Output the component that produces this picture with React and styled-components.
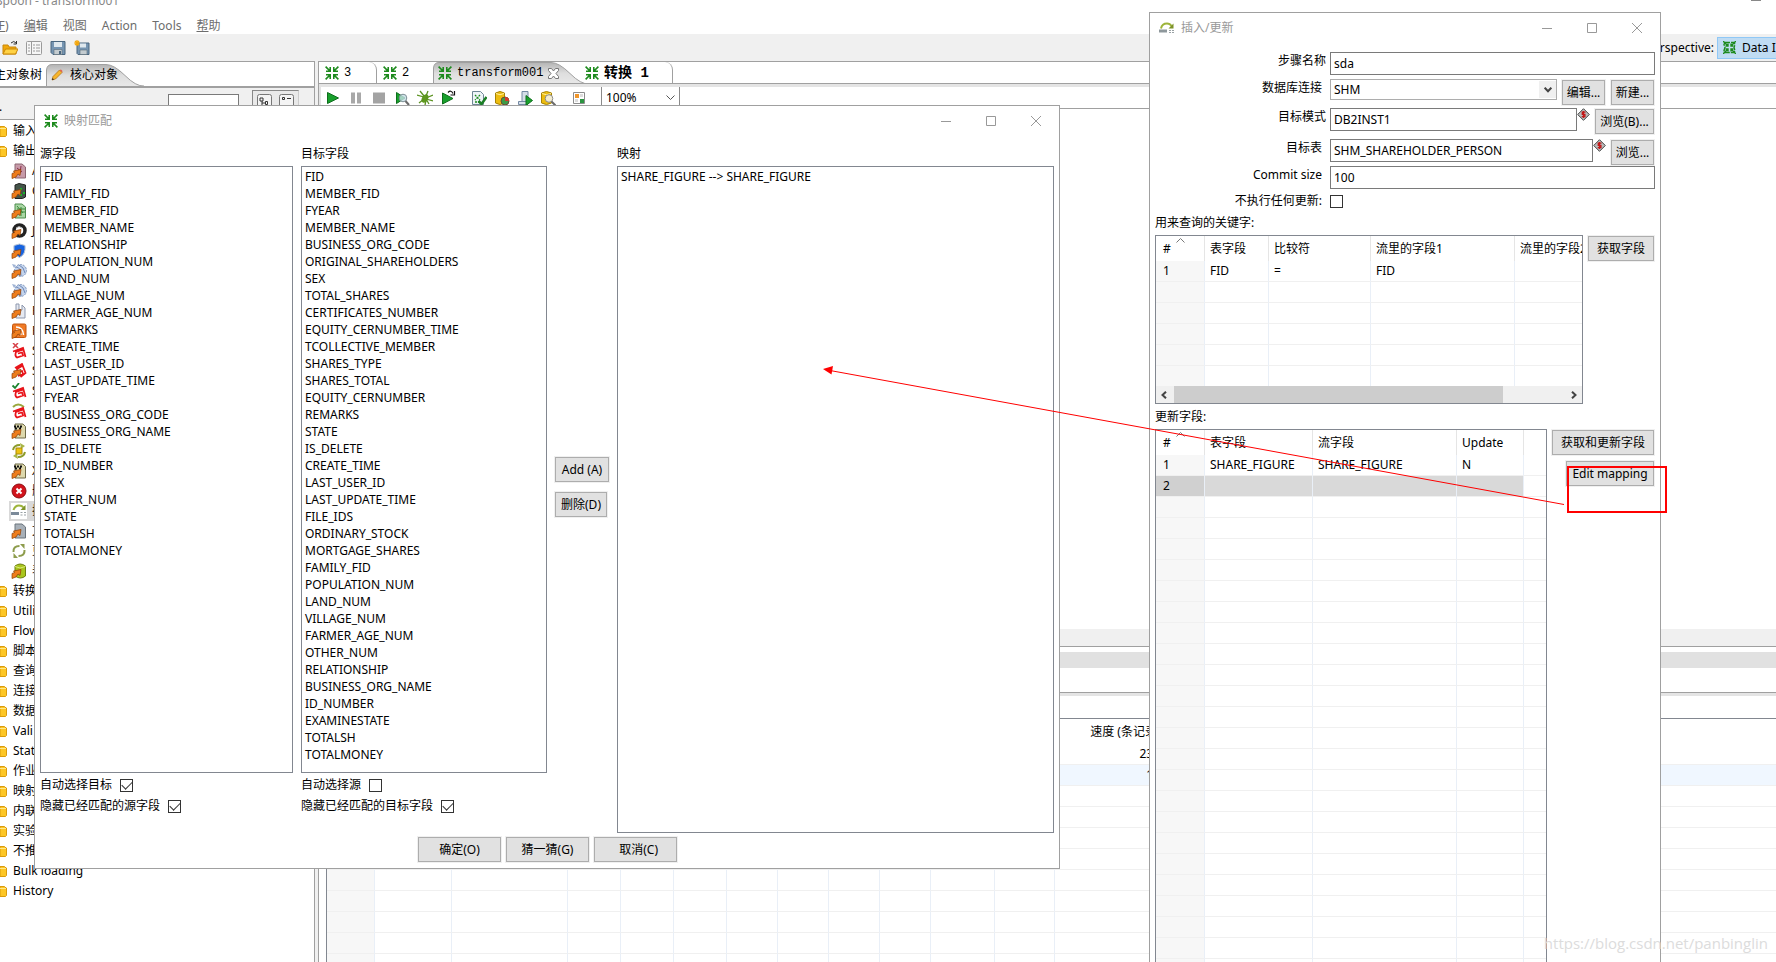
import React from 'react';
import styled, { createGlobalStyle } from 'styled-components';

const GlobalStyle = createGlobalStyle`
  * {
    box-sizing: border-box;
  }

  body {
    margin: 0;
    overflow: hidden;
    background: #fff;
  }

  body, button, input, select {
    font-family: "Noto Sans", "Noto Sans CJK SC", sans-serif;
    font-size: 12px;
    line-height: 18px;
    color: #000;
  }
`;

/* ---------- data ---------- */

const SOURCE_FIELDS = [
  'FID', 'FAMILY_FID', 'MEMBER_FID', 'MEMBER_NAME', 'RELATIONSHIP', 'POPULATION_NUM',
  'LAND_NUM', 'VILLAGE_NUM', 'FARMER_AGE_NUM', 'REMARKS', 'CREATE_TIME', 'LAST_USER_ID',
  'LAST_UPDATE_TIME', 'FYEAR', 'BUSINESS_ORG_CODE', 'BUSINESS_ORG_NAME', 'IS_DELETE',
  'ID_NUMBER', 'SEX', 'OTHER_NUM', 'STATE', 'TOTALSH', 'TOTALMONEY',
];

const TARGET_FIELDS = [
  'FID', 'MEMBER_FID', 'FYEAR', 'MEMBER_NAME', 'BUSINESS_ORG_CODE', 'ORIGINAL_SHAREHOLDERS',
  'SEX', 'TOTAL_SHARES', 'CERTIFICATES_NUMBER', 'EQUITY_CERNUMBER_TIME', 'TCOLLECTIVE_MEMBER',
  'SHARES_TYPE', 'SHARES_TOTAL', 'EQUITY_CERNUMBER', 'REMARKS', 'STATE', 'IS_DELETE',
  'CREATE_TIME', 'LAST_USER_ID', 'LAST_UPDATE_TIME', 'FILE_IDS', 'ORDINARY_STOCK',
  'MORTGAGE_SHARES', 'FAMILY_FID', 'POPULATION_NUM', 'LAND_NUM', 'VILLAGE_NUM',
  'FARMER_AGE_NUM', 'OTHER_NUM', 'RELATIONSHIP', 'BUSINESS_ORG_NAME', 'ID_NUMBER',
  'EXAMINESTATE', 'TOTALSH', 'TOTALMONEY',
];

const OUTPUT_STEPS = [
  { name: 'A', icon: 'access' },
  { name: 'C', icon: 'cube' },
  { name: 'E', icon: 'excel' },
  { name: 'J', icon: 'json' },
  { name: 'L', icon: 'ldap' },
  { name: 'P', icon: 'palo' },
  { name: 'P', icon: 'palo' },
  { name: 'P', icon: 'props' },
  { name: 'R', icon: 'rss' },
  { name: 'S', icon: 'sfDelete' },
  { name: 'S', icon: 'sfInsert' },
  { name: 'S', icon: 'sfUpdate' },
  { name: 'S', icon: 'sfUpsert' },
  { name: 'S', icon: 'sql' },
  { name: 'S', icon: 'sync' },
  { name: 'X', icon: 'sql' },
  { name: '删', icon: 'remove' },
  { name: '插', icon: 'upsert', selected: true },
  { name: '文', icon: 'text' },
  { name: '更', icon: 'update' },
  { name: '表', icon: 'table' },
];

const FOLDERS = [
  '转换', 'Utili', 'Flow', '脚本', '查询', '连接', '数据', 'Vali', 'Stat', '作业',
  '映射', '内联', '实验', '不推', 'Bulk loading', 'History',
];

/* ---------- icons ---------- */

const Svg = styled.svg`
  display: block;
  flex: none;
`;

const MappingIcon = () => (
  <Svg width="14" height="14" viewBox="0 0 14 14" fill="none" stroke="#1d8a1d" strokeWidth="1.6">
    <path d="M.6.6 5 5M5.2 1v4.3H1M13.4.6 9 5M8.8 1v4.3H13M.6 13.4 5 9M5.2 13V8.7H1M13.4 13.4 9 9M8.8 13V8.7H13" />
  </Svg>
);

const PerspectiveIcon = () => (
  <Svg width="13" height="13" viewBox="0 0 13 13" fill="none" stroke="#1d8a1d" strokeWidth="1.4">
    <path d="M2 1.5h9l1 2-1 3 1 3-1 2H2l-1-2 1-3-1-3z" strokeDasharray="5 1" />
    <path d="M0 0l5 5M13 0L8 5M0 13l5-5M13 13L8 8M5 2.500v2.500H2.500M8 2.500v2.500h2.500M5 10.500V8H2.500M8 10.500V8h2.500" />
  </Svg>
);

const UpsertIcon = () => (
  <Svg width="16" height="12" viewBox="0 0 16 12">
    <path d="M2 6.500Q3 1.500 8 1.500q3 0 4.500 2.500" fill="none" stroke="#9db43a" strokeWidth="2" />
    <path d="M14.500 1.500v5h-5z" fill="#7d9228" />
    <path d="M0 7.500h8v3H0z" fill="#8e989c" />
    <path d="M10 8h2v1h-2zM13 8h2v1h-2zM10 10h2v1h-2zM13 10h2v1h-2z" fill="#9aa2a5" />
  </Svg>
);

const FolderIcon = () => (
  <Svg width="7" height="11" viewBox="0 0 7 11">
    <path d="M0 .5h4.500l1.500 1.500h.5v7.500l-1 1H0z" fill="#fdc625" stroke="#d99a0c" />
    <path d="M0 2.500h6" stroke="#ffe88a" />
  </Svg>
);

const OrangeArrow = () => (
  <path d="M1 15.500v-5l2.500-1L2.500 8 10 6.500l-1 6-2-1.500-2 3z" fill="#ee7d1c" stroke="#8a3f08" strokeWidth=".7" />
);

const Salesforce = () => (
  <path d="M2 8.500 12 5l2.500 9M12.500 6.500 5 9q-1.500 4 1 5.500l6-2-1-3-4 1" fill="none" stroke="#e8141a" strokeWidth="1.8" />
);

const STEP_SHAPES = {
  access: (
    <>
      <path d="M4 1h7l3.500 3v11H4z" fill="#c79aa8" stroke="#8d6672" />
      <path d="M6 5l5 4M10 3l-1 7" stroke="#8a2b4c" />
      <OrangeArrow />
    </>
  ),
  cube: (
    <>
      <path d="M4 2l4-1.500 6.500 1.500v12l-3 1.500H4z" fill="#44544a" stroke="#222" />
      <path d="M9 5h2v2H9zM12 9h2v2h-2zM9 11h2v2H9z" fill="#19b529" />
      <OrangeArrow />
    </>
  ),
  excel: (
    <>
      <path d="M4 1h7l3.500 3v11H4z" fill="#a9d6a4" stroke="#4f8d4e" />
      <path d="M6 6h8M6 9h8M10 4v9M6 3l6 7" stroke="#3a8a3b" />
      <OrangeArrow />
    </>
  ),
  json: (
    <>
      <circle cx="8.500" cy="7.500" r="5.500" fill="none" stroke="#222" strokeWidth="3.500" />
      <path d="M5 5q3-3 6 0" fill="none" stroke="#aaa" />
      <OrangeArrow />
    </>
  ),
  ldap: (
    <>
      <path d="M8.500 1 14 2.500q1 9-5.500 12Q2 11.500 3 2.500z" fill="#1763df" stroke="#b8c4d4" />
      <OrangeArrow />
    </>
  ),
  palo: (
    <>
      <circle cx="9.500" cy="7.500" r="6" fill="#c4d4ec" stroke="#7f96bf" strokeDasharray="2 1" />
      <path d="M5 4q5 0 5 9M8 2q5 2 6 8" fill="none" stroke="#6f88b8" />
      <path d="M1 1l4 1-2 3z" fill="#9fb3d4" />
      <OrangeArrow />
    </>
  ),
  props: (
    <>
      <path d="M5 1h3v6h3V2l3 3v10H5z" fill="#e6eaf2" stroke="#8d97ad" />
      <OrangeArrow />
    </>
  ),
  rss: (
    <>
      <rect x="1.500" y="1" width="13.500" height="13.500" rx="1.500" fill="#f07a25" stroke="#c2540c" />
      <path d="M5 4q7 0 7.500 8M5 7q4 0 5 5" fill="none" stroke="#fff" strokeWidth="1.500" />
      <OrangeArrow />
    </>
  ),
  sfDelete: (
    <>
      <Salesforce />
      <path d="M2 0l5 5M7 0L2 5" stroke="#d6434a" strokeWidth="1.500" />
    </>
  ),
  sfInsert: (
    <>
      <path d="M4 5l7-4 3.500 9-5 4M11 3L6 6l1 3 4-1 1 3-5 2" fill="none" stroke="#e8141a" strokeWidth="1.800" />
      <OrangeArrow />
    </>
  ),
  sfUpdate: (
    <>
      <Salesforce />
      <path d="M1.500 2.500L4 5l4-5" fill="none" stroke="#1c8430" strokeWidth="1.800" />
    </>
  ),
  sfUpsert: (
    <>
      <path d="M2 4q5-5 11 0" fill="none" stroke="#9aa83e" strokeWidth="2" />
      <Salesforce />
    </>
  ),
  sql: (
    <>
      <path d="M4 1h8l2.500 2.500V15H4z" fill="#ddd8ac" stroke="#6e6a48" />
      <path d="M3 3.500h2M6 3.500h2M9 3.500h2M4 5.500h2M8 5.500h2" stroke="#111" strokeWidth="2" />
      <OrangeArrow />
    </>
  ),
  sync: (
    <>
      <path d="M2 7q1-5 7-5M14 9q-1 5-7 5" fill="none" stroke="#8d9c2c" strokeWidth="2" />
      <path d="M9 0l5 3-4 3zM7 16l-5-3 4-3z" fill="#a8b648" />
      <path d="M5 5h6v6H5z" fill="#eec310" stroke="#a98a06" />
    </>
  ),
  remove: (
    <>
      <circle cx="8" cy="8" r="7" fill="#d2141c" stroke="#8e0b10" />
      <path d="M5.500 5.500l5 5M10.500 5.500l-5 5" stroke="#fff" strokeWidth="2" />
    </>
  ),
  upsert: (
    <>
      <path d="M2.500 7Q4 2.500 8 2.500q3 0 4.500 2" fill="none" stroke="#9db43a" strokeWidth="2" />
      <path d="M14.500 2v5h-5z" fill="#7d9228" />
      <path d="M0 9h8v3H0z" fill="#7b8a99" />
      <path d="M9.500 9h2v1h-2zM13 9h2v1h-2zM9.500 11.500h2v1h-2zM13 11.500h2v1h-2z" fill="#9aa2a5" />
    </>
  ),
  text: (
    <>
      <path d="M4 1h7l3.500 3v11H4z" fill="#a8b0b8" stroke="#6b747d" />
      <OrangeArrow />
    </>
  ),
  update: (
    <>
      <path d="M2.500 9q-.5-6 6-6M13.500 7q.5 6-6 6" fill="none" stroke="#8d9c4c" strokeWidth="2" />
      <path d="M9 1h4.500v5zM7 15H2.500v-5z" fill="#8d9c4c" />
    </>
  ),
  table: (
    <>
      <path d="M4 3q5-4 10.500 0v10q-5 4-10.500 0z" fill="#a9c51c" stroke="#6d8110" />
      <path d="M4 3.500q5 3 10.500 0" fill="none" stroke="#dcea7c" />
      <OrangeArrow />
    </>
  ),
};

const StepIcon = ({ name }) => (
  <Svg width="16" height="16" viewBox="0 0 16 16">
    {STEP_SHAPES[name]}
  </Svg>
);

const TOOL_SHAPES = {
  open: (
    <>
      <path d="M1 14V5h5l1 2h7v7z" fill="#f0a80c" stroke="#c98708" />
      <path d="M1 14l2.500-5H16l-2.500 5z" fill="#ffd244" stroke="#c98708" />
      <path d="M9 3q3-3 5 0M14.500 1v3h-3" fill="none" stroke="#333" />
    </>
  ),
  explore: (
    <>
      <rect x=".5" y="1.500" width="15" height="13" rx="1" fill="#f6f6f6" stroke="#9a9a9a" />
      <path d="M5.500 2v12" stroke="#9a9a9a" />
      <path d="M2 5h2M2 8h2M2 11h2M7 5h2M7 8h2M7 11h2M10 5h4M10 8h4M10 11h4" stroke="#9a9a9a" />
    </>
  ),
  save: (
    <>
      <path d="M1 1.500h14v13H3l-2-2z" fill="#7695b2" stroke="#4b677f" />
      <path d="M4 2h8v5H4z" fill="#dfe8ee" />
      <path d="M4 9.500h8v5H4z" fill="#c4ccd0" stroke="#5d6c77" strokeWidth=".6" />
      <path d="M9 11h2v3H9z" fill="#4b677f" />
    </>
  ),
  saveAs: (
    <>
      <path d="M3 3h12v11.500H4l-1-1z" fill="#7695b2" stroke="#4b677f" />
      <path d="M6 3.500h6v4H6z" fill="#dfe8ee" />
      <path d="M6 10h7v4.500H6z" fill="#c4ccd0" stroke="#5d6c77" strokeWidth=".6" />
      <path d="M3 0v6M0 3h6M1 1l4 4M5 1L1 5" stroke="#f5a70c" strokeWidth="1.200" />
    </>
  ),
  play: <path d="M2.500 2.500v11l11-5.500z" fill="#18a02c" stroke="#0e6e1c" />,
  pause: <path d="M3 2.500h4v11H3zM9 2.500h4v11H9z" fill="#a8a8a8" />,
  stop: <path d="M2 2.500h12v11H2z" fill="#a3a3a3" />,
  preview: (
    <>
      <path d="M2.500 2.500v11L11 8z" fill="#18a02c" stroke="#0e6e1c" />
      <circle cx="9" cy="8" r="3.800" fill="#c5dfe6" fillOpacity=".8" stroke="#7c8d94" />
      <path d="M11.500 11l3.500 4" stroke="#6b6b6b" strokeWidth="2" />
    </>
  ),
  debug: (
    <>
      <ellipse cx="8" cy="8.500" rx="3" ry="4.500" fill="#5f9a1e" transform="rotate(30 8 8.500)" />
      <path d="M0 5l7 2M3 1l4 5M11 1L9 6M16 5L9 8M16 11L9 9M2 13l5-4M8 15l1-5M12 14l-3-5" stroke="#5b9220" strokeWidth="1.300" />
    </>
  ),
  replay: (
    <>
      <path d="M2.500 3v11L13 8.500z" fill="#18a02c" stroke="#0e6e1c" />
      <path d="M8 2.500q3-3 5 1M14.500 1v4h-4" fill="none" stroke="#111" strokeWidth="1.200" />
    </>
  ),
  verify: (
    <>
      <path d="M1.500 1.500h8l3 3v10h-11z" fill="#eef4f8" stroke="#6f8796" />
      <path d="M4 5l5 5M9 5l-5 5M4 12h4" stroke="#1d8a1d" strokeWidth="1.300" strokeDasharray="2 1" />
      <path d="M7.500 11l3 3L15.500 7" fill="none" stroke="#1b7f25" strokeWidth="2.500" />
    </>
  ),
  impact: (
    <>
      <path d="M1.500 3q4.500-3 9 0v10q-4.500 3-9 0z" fill="#edbd10" stroke="#a88405" />
      <path d="M2 3.500q4 2.500 8 0" fill="none" stroke="#fff0a0" />
      <circle cx="11" cy="11" r="4" fill="#3d9c48" stroke="#6c4a33" />
      <path d="M11 11V7a4 4 0 0 1 4 4z" fill="#d63a2b" />
    </>
  ),
  script: (
    <>
      <path d="M5 1.500h6v10H5zM1.500 11.500h9v3h-9z" fill="#d5dee8" stroke="#7389a3" />
      <path d="M9 5.500v10l6.500-5z" fill="#18a02c" stroke="#0e6e1c" />
    </>
  ),
  database: (
    <>
      <path d="M1.500 3q5-3 10 0v10q-5 3-10 0z" fill="#edbd10" stroke="#a88405" />
      <path d="M2 3.500q4.500 2.500 9 0" fill="none" stroke="#fff0a0" />
      <circle cx="9" cy="8.500" r="3.800" fill="#f3ecd0" stroke="#8b8b8b" />
      <path d="M11.500 11.500L15.500 15.500" stroke="#6b6b6b" strokeWidth="2" />
    </>
  ),
  grid: (
    <>
      <path d="M2.500 2.500h11v11h-11z" fill="#fff" stroke="#8c8c8c" />
      <path d="M4 4h4v4H4z" fill="#f0952a" />
      <path d="M9 9h4v4H9z" fill="#2b9440" />
      <path d="M9 4h3v3H9zM4 9h3v3H4z" fill="#dcdcdc" />
    </>
  ),
};

const ToolIcon = ({ name }) => (
  <Svg width="16" height="16" viewBox="0 0 16 16">
    {TOOL_SHAPES[name]}
  </Svg>
);

const PencilIcon = () => (
  <Svg width="12" height="12" viewBox="0 0 12 12">
    <path d="M1 11l1-3.500L8.500 1 11 3.500 4.500 10z" fill="#f7b52b" stroke="#b3741a" strokeWidth=".8" />
    <path d="M8.500 1L11 3.500l.5-1.500L10 .5z" fill="#e0604c" />
    <path d="M1 11l.6-2L3 10.400z" fill="#222" />
  </Svg>
);

const VariableIcon = () => (
  <Svg width="13" height="13" viewBox="0 0 13 13">
    <path d="M6.500.7 12.300 6.500 6.500 12.300.7 6.500z" fill="#b9bcbc" stroke="#444" />
    <path d="M8.500 4.200H5.300v2.200h2.600v2.300H4.700M6.500 3v7" fill="none" stroke="#c01818" strokeWidth="1.300" />
  </Svg>
);

const MinimizeGlyph = () => (
  <Svg width="10" height="10" viewBox="0 0 10 10"><path d="M0 5.500h10" stroke="#999" /></Svg>
);
const MaximizeGlyph = () => (
  <Svg width="10" height="10" viewBox="0 0 10 10"><path d="M.5.5h9v9h-9z" fill="none" stroke="#999" /></Svg>
);
const CloseGlyph = () => (
  <Svg width="10" height="10" viewBox="0 0 10 10"><path d="M0 0l10 10M10 0L0 10" stroke="#999" /></Svg>
);

/* ---------- shared controls ---------- */

const IconButton = styled.button`
  display: flex;
  padding: 0;
  border: 0;
  background: none;
`;

const Button = styled.button`
  flex: none;
  height: 25px;
  width: ${props => props.$width}px;
  padding: 0;
  border: 1px solid #adadad;
  background: #e1e1e1;
  box-shadow: 0 0 0 1px #f0f0f0;
  text-align: center;
  white-space: pre;
`;

const Check = styled.input`
  appearance: none;
  flex: none;
  width: 13px;
  height: 13px;
  margin: 0;
  border: 1px solid #333;
  background: #fff;

  &:checked::after {
    content: '';
    display: block;
    width: 9px;
    height: 5px;
    margin: 1px;
    border: solid #333;
    border-width: 0 0 1px 1px;
    transform: rotate(-45deg);
  }
`;

const TitleBar = styled.header`
  display: flex;
  align-items: center;
  flex: none;
  height: 29px;
  padding: 0 18px 0 9px;
  gap: 6px;
  color: #999;

  h2 {
    flex: 1;
    margin: 0;
    font-size: 12px;
    font-weight: 400;
  }
`;

const WindowButtons = styled.div`
  display: flex;
  gap: 35px;
`;

const DialogTitle = ({ icon, children }) => (
  <TitleBar>
    {icon}
    <h2>{children}</h2>
    <WindowButtons>
      <IconButton aria-label="Minimize"><MinimizeGlyph /></IconButton>
      <IconButton aria-label="Maximize"><MaximizeGlyph /></IconButton>
      <IconButton aria-label="Close"><CloseGlyph /></IconButton>
    </WindowButtons>
  </TitleBar>
);

const Table = styled.table`
  width: ${props => (props.$width ? `${props.$width}px` : '100%')};
  table-layout: fixed;
  border-collapse: separate;
  border-spacing: 0;

  th, td {
    height: 21px;
    padding: 0 0 0 5px;
    border-right: 1px solid #e9eff7;
    border-bottom: 1px solid #f0f0f0;
    font-weight: 400;
    text-align: left;
    white-space: nowrap;
    overflow: hidden;
  }

  th {
    height: 25px;
    border-right-color: #e5e5e5;
    border-bottom: 0;
  }

  th:first-child, td:first-child {
    padding-left: 7px;
  }

  td:first-child {
    background: #f7f7f7;
  }

  th:last-child, td:last-child {
    border-right: 0;
  }
`;

const Row = styled.tr`
  td:not(:last-child) {
    background: ${props => props.$selected && '#d9d9d9'};
  }

  td:first-child {
    background: ${props => props.$selected && '#d0d0d0'};
  }
`;

const SortHead = styled.th`
  position: relative;

  svg {
    position: absolute;
    top: 2px;
    left: 20px;
  }
`;

const DataTable = ({ width, columns, rows, selected, count }) => (
  <Table $width={width}>
    <colgroup>
      {columns.map((column, i) => <col key={i} style={{ width: column.width }} />)}
    </colgroup>
    <thead>
      <tr>
        {columns.map((column, i) => (i === 0 ? (
          <SortHead key={i}>
            {column.title}
            <Svg width="9" height="5" viewBox="0 0 9 5" fill="none" stroke="#777"><path d="M.5 4.500l4-4 4 4" /></Svg>
          </SortHead>
        ) : <th key={i}>{column.title}</th>))}
      </tr>
    </thead>
    <tbody>
      {Array.from({ length: count }, (_, r) => (
        <Row key={r} $selected={r === selected}>
          {columns.map((column, c) => <td key={c}>{rows[r] && rows[r][c]}</td>)}
        </Row>
      ))}
    </tbody>
  </Table>
);

/* ---------- main window ---------- */

const Desktop = styled.div`
  position: relative;
  display: flex;
  flex-direction: column;
  height: 100vh;
  overflow: hidden;
  background: #fff;
`;

const AppTitle = styled.div`
  display: flex;
  justify-content: space-between;
  align-items: flex-end;
  flex: none;
  height: 10px;
  padding-right: 15px;
  margin-left: -4px;
  overflow: hidden;
  color: #888;

  i {
    align-self: flex-start;
    width: 10px;
    height: 1px;
    background: #888;
  }
`;

const MenuBar = styled.nav`
  display: flex;
  align-items: center;
  flex: none;
  gap: 15px;
  height: 24px;
  margin-left: -5px;
  padding-top: 7px;

  a {
    color: #6d6d6d;
    text-decoration: none;
  }
`;

const ToolBar = styled.div`
  display: flex;
  align-items: center;
  justify-content: space-between;
  flex: none;
  height: 27px;
  background: #f0f0f0;
`;

const ToolGroup = styled.div`
  display: flex;
  align-items: center;
  gap: 8px;
  padding-left: 2px;
`;

const Perspective = styled.div`
  display: flex;
  align-items: center;
  gap: 3px;

  button {
    display: flex;
    align-items: center;
    gap: 6px;
    width: 59px;
    height: 22px;
    padding: 0 0 0 5px;
    border: 1px solid #90c8f6;
    border-right: 0;
    background: #c0dcf3;
    white-space: nowrap;
    overflow: hidden;
  }
`;

const Workspace = styled.div`
  display: flex;
  flex: 1;
  gap: 3px;
  min-height: 0;
  background: #f0f0f0;
`;

const SidePanel = styled.aside`
  display: flex;
  flex-direction: column;
  flex: none;
  width: 315px;
  border-top: 1px solid #a0a0a0;
  border-right: 1px solid #a0a0a0;
  background: #fff;
`;

const SideTabs = styled.div`
  display: flex;
  align-items: stretch;
  flex: none;
  height: 26px;
  padding-top: 2px;
  border-bottom: 2px solid #a0a0a0;
`;

const SideTab = styled.button`
  padding: 0 4px 0 0;
  margin-left: -6px;
  border: 0;
  background: none;
`;

const CurvedTab = styled.button`
  display: grid;
  flex: none;
  width: ${props => props.$width}px;
  padding: 0;
  border: 0;
  background: none;

  > * {
    grid-area: 1 / 1;
  }

  > span {
    display: flex;
    align-items: center;
    padding-left: 5px;
    gap: ${props => props.$gap}px;
  }
`;

const TabShape = ({ width, id }) => (
  <Svg width={width} height="22" viewBox={`0 0 ${width} 22`}>
    <defs>
      <linearGradient id={id} x2="0" y2="1">
        <stop offset="0" stopColor="#b4b4b4" />
        <stop offset=".5" stopColor="#dedede" />
        <stop offset="1" stopColor="#e8e8e8" />
      </linearGradient>
    </defs>
    <path
      d={`M.5 22V6Q1 .5 6 .5H${width - 38}q8 0 19 11t19 10.500`}
      fill={`url(#${id})`}
      stroke="#a0a0a0"
    />
  </Svg>
);

const SearchRow = styled.div`
  display: flex;
  flex: none;
  justify-content: flex-end;
  height: 32px;
  padding: 2px 15px 0 0;
  gap: 13px;
  border-bottom: 1px solid #a0a0a0;
  background: #f0f0f0;

  > span {
    margin: 8px auto 0 -1px;
  }

  input {
    width: 71px;
    height: 24px;
    margin-top: 4px;
    border: 1px solid #7a7a7a;
    background: #fff;
  }
`;

const ToggleGroup = styled.div`
  display: flex;
  gap: 7px;
  padding: 3px 4px 0;
  border: 1px solid #888;
  border-right-color: #ccc;
  background: #e9e9e9;
`;

const Tree = styled.ul`
  margin: 0;
  padding: 1px 0 0;
  list-style: none;
`;

const TreeItem = styled.li`
  display: flex;
  align-items: center;
  gap: ${props => (props.$child ? 5 : 6)}px;
  height: 20px;
  margin-left: ${props => (props.$child ? 9 : 0)}px;
  padding-left: ${props => (props.$child ? 2 : 0)}px;
  background: ${props => props.$selected && '#d9d9d9'};
  white-space: nowrap;

  svg {
    background: ${props => props.$selected && '#fff'};
  }
`;

const Editor = styled.main`
  display: flex;
  flex-direction: column;
  flex: 1;
  min-width: 0;
  border-top: 1px solid #a0a0a0;
  border-left: 1px solid #a0a0a0;
  background: #fff;
`;

const EditorTabs = styled.div`
  display: flex;
  flex: none;
  height: 22px;
  border-bottom: 1px solid #a0a0a0;
  overflow: hidden;
  font-family: "Liberation Mono", "Noto Sans CJK SC", monospace;
`;

const EditorTab = styled.button`
  display: flex;
  align-items: center;
  gap: 5px;
  flex: none;
  width: ${props => props.$width}px;
  height: 22px;
  padding: 0 0 0 6px;
  border: 0;
  border-right: ${props => props.$edge && '1px solid #a0a0a0'};
  border-top-right-radius: 8px;
  background: none;
  font-family: inherit;
  font-size: ${props => (props.$bold ? 14 : 12)}px;
  font-weight: ${props => (props.$bold ? 700 : 400)};
  white-space: pre;
`;

const ActiveLabel = styled.b`
  font-family: "Liberation Mono", monospace;
  font-weight: 400;
`;

const EditorTools = styled.div`
  display: flex;
  align-items: center;
  flex: none;
  gap: 7px;
  height: 25px;
  padding-left: 4px;
  border-top: 3px solid #e4e4e4;
  border-left: 2px solid #e4e4e4;
  border-bottom: 1px solid #a0a0a0;

  select {
    appearance: none;
    width: 79px;
    height: 22px;
    padding: 0 4px;
    border: 1px solid #8a8a8a;
    border-width: 0 1px;
    border-radius: 0;
    background: #fff;
  }
`;

const Spacer = styled.i`
  width: ${props => props.$width}px;
`;

const Zoom = styled.label`
  display: grid;
  align-items: center;

  > * {
    grid-area: 1 / 1;
  }

  svg {
    justify-self: end;
    margin-right: 5px;
  }
`;

const Canvas = styled.div`
  flex: 1;
  border-bottom: 17px solid #f0f0f0;
`;

const Results = styled.section`
  display: flex;
  flex-direction: column;
  flex: 0 0 316px;
  padding-top: 5px;
  border-top: 1px solid #a0a0a0;
  overflow: hidden;
`;

const Band = styled.div`
  flex: none;
  height: 16px;
  background: #e1e1e1;
`;

const ResultTabs = styled.div`
  flex: none;
  height: 28px;
  border-bottom: 3px solid #e4e4e4;
  box-shadow: inset 0 -1px 0 #a0a0a0;
`;

const Metrics = styled.div`
  flex: none;
  margin: 22px 0 0 7px;
  border-top: 1px solid #828790;
  border-left: 1px solid #828790;

  th:nth-child(13), td:nth-child(13) {
    padding-right: 8px;
    border-right: 0;
    text-align: right;
  }

  tbody tr:nth-child(2) td:not(:first-child) {
    background: #f0f7ff;
  }

  th svg {
    display: none;
  }
`;

const METRIC_WIDTHS = [48, 77, 116, 53, 53, 53, 51, 51, 51, 51, 64, 60, 130];
const METRIC_COLUMNS = [
  ...METRIC_WIDTHS.map((width, i) => ({ width, title: i === 12 ? '速度 (条记录/秒)' : '' })),
  { title: '' },
];
const speedRow = value => [...Array(12).fill(''), value];
const METRIC_ROWS = [speedRow('23,809'), speedRow('1,785')];

const EDITOR_TOOLS = ['play', 'pause', 'stop', 'preview', 'debug', 'replay', null, 'verify', 'impact', 'script', 'database', null, 'grid'];

const MainWindow = () => (
  <>
    <AppTitle>
      <span>Spoon - transform001</span>
      <i />
    </AppTitle>
    <MenuBar>
      <a href="#file">(<u>F</u>)</a>
      <a href="#edit"><u>编</u>辑</a>
      <a href="#view">视图</a>
      <a href="#action">Action</a>
      <a href="#tools">Tools</a>
      <a href="#help"><u>帮</u>助</a>
    </MenuBar>
    <ToolBar>
      <ToolGroup>
        {['open', 'explore', 'save', 'saveAs'].map(name => (
          <IconButton key={name} aria-label={name}><ToolIcon name={name} /></IconButton>
        ))}
      </ToolGroup>
      <Perspective>
        <span>Perspective:</span>
        <button><PerspectiveIcon />Data Integration</button>
      </Perspective>
    </ToolBar>
    <Workspace>
      <SidePanel>
        <SideTabs>
          <SideTab>主对象树</SideTab>
          <CurvedTab $width={98} $gap={7}>
            <TabShape width={98} id="side-tab" />
            <span><PencilIcon />核心对象</span>
          </CurvedTab>
        </SideTabs>
        <SearchRow>
          <span>.</span>
          <input aria-label="Steps" />
          <ToggleGroup>
            <IconButton aria-label="Expand all">
              <Svg width="15" height="18" viewBox="0 0 15 18" fill="none" stroke="#777">
                <rect x=".5" y=".5" width="14" height="17" rx="2" fill="#f4f4f4" />
                <path d="M3 4h3v3H3zM5 7v7M5 9h3M5 13h3M8.500 7.500h2v3h-2zM8.500 12h2v3h-2z" stroke="#333" />
              </Svg>
            </IconButton>
            <IconButton aria-label="Collapse all">
              <Svg width="15" height="18" viewBox="0 0 15 18" fill="none" stroke="#777">
                <rect x=".5" y=".5" width="14" height="17" rx="2" fill="#f4f4f4" />
                <path d="M3.500 3.500h2v2h-2zM8 4.500h4" stroke="#333" />
              </Svg>
            </IconButton>
          </ToggleGroup>
        </SearchRow>
        <Tree>
          <TreeItem><FolderIcon />输入</TreeItem>
          <TreeItem><FolderIcon />输出</TreeItem>
          {OUTPUT_STEPS.map((step, i) => (
            <TreeItem key={i} $child $selected={step.selected}>
              <StepIcon name={step.icon} />
              {step.name}
            </TreeItem>
          ))}
          {FOLDERS.map(name => <TreeItem key={name}><FolderIcon />{name}</TreeItem>)}
        </Tree>
      </SidePanel>
      <Editor>
        <EditorTabs>
          <EditorTab $width={58} $edge><MappingIcon />3</EditorTab>
          <EditorTab $width={56}><MappingIcon />2</EditorTab>
          <CurvedTab $width={146} $gap={5}>
            <TabShape width={156} id="editor-tab" />
            <span>
              <MappingIcon />
              <ActiveLabel>transform001</ActiveLabel>
              <Svg width="11" height="11" viewBox="0 0 11 11">
                <path d="M.5.5h3l2 2.500 2-2.500h3v2L8 5.500 10.500 8.500v2h-3l-2-2.500-2 2.500h-3v-2L3 5.500.5 2.500z" fill="#fff" stroke="#777" />
              </Svg>
            </span>
          </CurvedTab>
          <EditorTab $width={94} $edge $bold><MappingIcon />转换 1</EditorTab>
        </EditorTabs>
        <EditorTools>
          {EDITOR_TOOLS.map((name, i) => (name
            ? <IconButton key={i} aria-label={name}><ToolIcon name={name} /></IconButton>
            : <Spacer key={i} $width={1} />))}
          <Spacer $width={0} />
          <Zoom>
            <select aria-label="Zoom" defaultValue="100%">
              <option>100%</option>
              <option>200%</option>
            </select>
            <Svg width="9" height="6" viewBox="0 0 9 6" fill="none" stroke="#555"><path d="M.5.5l4 4 4-4" /></Svg>
          </Zoom>
        </EditorTools>
        <Canvas />
        <Results>
          <Band />
          <ResultTabs />
          <Metrics>
            <DataTable columns={METRIC_COLUMNS} rows={METRIC_ROWS} count={12} />
          </Metrics>
        </Results>
      </Editor>
    </Workspace>
  </>
);

/* ---------- mapping dialog ---------- */

const Dialog = styled.section`
  position: absolute;
  display: flex;
  flex-direction: column;
  border: 1px solid #a0a0a0;
  background: #fff;
`;

const MappingWindow = styled(Dialog)`
  top: 105px;
  left: 34px;
  width: 1026px;
`;

const MappingBody = styled.div`
  display: grid;
  grid-template-columns: 253px 246px 54px 1fr;
  gap: 0 8px;
  padding: 10px 5px 0;
`;

const Column = styled.div`
  display: flex;
  flex-direction: column;
  align-items: flex-start;
`;

const Caption = styled.h3`
  margin: 0 0 3px;
  font-size: 12px;
  font-weight: 400;
`;

const ListBox = styled.ul`
  width: 100%;
  height: ${props => props.$height}px;
  margin: 0;
  padding: 1px 3px;
  border: 1px solid #828790;
  list-style: none;
  line-height: 17px;
  white-space: pre;
`;

const Option = styled.label`
  display: flex;
  align-items: center;
  gap: 8px;
  margin-top: 3px;
`;

const MoveButtons = styled(Column)`
  gap: 10px;
  padding-top: 312px;
`;

const DialogButtons = styled.footer`
  display: flex;
  gap: 5px;
  padding: 4px 0 6px 383px;
`;

const FieldList = ({ title, items, height = 607, children }) => (
  <Column>
    <Caption>{title}</Caption>
    <ListBox role="listbox" aria-label={title} $height={height}>
      {items.map(item => <li key={item} role="option" aria-selected="false">{item}</li>)}
    </ListBox>
    {children}
  </Column>
);

const MappingDialog = () => (
  <MappingWindow>
    <DialogTitle icon={<MappingIcon />}>映射匹配</DialogTitle>
    <MappingBody>
      <FieldList title="源字段" items={SOURCE_FIELDS}>
        <Option>自动选择目标<Check type="checkbox" defaultChecked /></Option>
        <Option>隐藏已经匹配的源字段<Check type="checkbox" defaultChecked /></Option>
      </FieldList>
      <FieldList title="目标字段" items={TARGET_FIELDS}>
        <Option>自动选择源<Check type="checkbox" /></Option>
        <Option>隐藏已经匹配的目标字段<Check type="checkbox" defaultChecked /></Option>
      </FieldList>
      <MoveButtons>
        <Button $width={54}>Add (A)</Button>
        <Button $width={52}>删除(D)</Button>
      </MoveButtons>
      <FieldList title="映射" items={['SHARE_FIGURE --> SHARE_FIGURE']} height={667} />
    </MappingBody>
    <DialogButtons>
      <Button $width={83}>确定(O)</Button>
      <Button $width={83}>猜一猜(G)</Button>
      <Button $width={83}>{'  取消(C)'}</Button>
    </DialogButtons>
  </MappingWindow>
);

/* ---------- insert / update dialog ---------- */

const UpsertWindow = styled(Dialog)`
  top: 12px;
  left: 1149px;
  bottom: 0;
  width: 512px;
  border-bottom: 0;
  overflow: hidden;
`;

const Form = styled.form`
  display: flex;
  flex-direction: column;
  flex: 1;
  min-height: 0;
  padding: 10px 5px 0 5px;
`;

const FormRow = styled.div`
  display: flex;
  align-items: flex-start;
  flex: none;
  margin-bottom: ${props => props.$after}px;

  > label {
    flex: none;
    width: 175px;
    padding-right: ${props => (props.$near ? 4 : 8)}px;
    text-align: right;
  }

  > button {
    margin: 1px 1px 0 5px;
  }

  > ${Check} {
    margin-top: 3px;
  }
`;

const TextInput = styled.input`
  flex: 1;
  min-width: 0;
  height: 23px;
  padding: 0 3px;
  border: 1px solid #7a7a7a;
  background: #fff;
`;

const SelectBox = styled.div`
  display: grid;
  flex: 1;

  > * {
    grid-area: 1 / 1;
  }

  select {
    appearance: none;
    height: 21px;
    padding: 0 3px;
    border: 1px solid #adadad;
    border-radius: 0;
    background: #fff;
  }

  span {
    display: flex;
    align-items: center;
    justify-content: center;
    justify-self: end;
    width: 17px;
    height: 17px;
    margin: 2px 1px 0 0;
    background: #f0f0f0;
    pointer-events: none;
  }
`;

const SectionLabel = styled.div`
  flex: none;
  margin: 4px 0 3px;
`;

const GridRow = styled.div`
  display: flex;
  align-items: flex-start;
  gap: 5px;
  flex: ${props => (props.$fill ? 1 : 'none')};
  min-height: 0;
`;

const GridBox = styled.div`
  display: flex;
  flex-direction: column;
  flex: 1;
  min-width: 0;
  height: ${props => props.$height};
  border: 1px solid #828790;
  border-bottom-width: ${props => (props.$open ? 0 : 1)}px;
  overflow: hidden;
`;

const GridView = styled.div`
  flex: 1;
  min-height: 0;
  overflow: hidden;
`;

const GridButtons = styled.div`
  display: flex;
  flex-direction: column;
  align-items: flex-end;
  gap: 6px;
  padding: 1px 1px 0 0;
`;

const ScrollTrack = styled.div`
  display: flex;
  align-items: center;
  flex: none;
  height: 17px;
  padding: 0 5px;
  gap: 7px;
  background: #f0f0f0;
`;

const ScrollThumb = styled.div`
  flex: 0 0 79%;
  height: 17px;
  margin-right: auto;
  background: #cdcdcd;
`;

const KEY_COLUMNS = [
  { title: '#', width: 49 },
  { title: '表字段', width: 64 },
  { title: '比较符', width: 102 },
  { title: '流里的字段1', width: 144 },
  { title: '流里的字段2', width: 144 },
];

const UPDATE_COLUMNS = [
  { title: '#', width: 49 },
  { title: '表字段', width: 108 },
  { title: '流字段', width: 144 },
  { title: 'Update', width: 67 },
  { title: '' },
];

const UpsertDialog = () => (
  <UpsertWindow>
    <DialogTitle icon={<UpsertIcon />}>插入/更新</DialogTitle>
    <Form onSubmit={e => e.preventDefault()}>
      <FormRow $after={4} $near>
        <label htmlFor="step">步骤名称</label>
        <TextInput id="step" defaultValue="sda" />
      </FormRow>
      <FormRow $after={3}>
        <label htmlFor="connection">数据库连接</label>
        <SelectBox>
          <select id="connection" defaultValue="SHM"><option>SHM</option></select>
          <span>
            <Svg width="8" height="6" viewBox="0 0 8 6" fill="none" stroke="#444" strokeWidth="2"><path d="M.7.700l3.300 3.500L7.300.7" /></Svg>
          </span>
        </SelectBox>
        <Button type="button" $width={43}>编辑...</Button>
        <Button type="button" $width={43}>新建...</Button>
      </FormRow>
      <FormRow $after={5} $near>
        <label htmlFor="schema">目标模式</label>
        <TextInput id="schema" defaultValue="DB2INST1" />
        <VariableIcon />
        <Button type="button" $width={59}>浏览(B)...</Button>
      </FormRow>
      <FormRow $after={1}>
        <label htmlFor="target">目标表</label>
        <TextInput id="target" defaultValue="SHM_SHAREHOLDER_PERSON" />
        <VariableIcon />
        <Button type="button" $width={43}>浏览...</Button>
      </FormRow>
      <FormRow $after={3}>
        <label htmlFor="commit">Commit size</label>
        <TextInput id="commit" defaultValue="100" />
      </FormRow>
      <FormRow $after={0}>
        <label htmlFor="skip">不执行任何更新:</label>
        <Check id="skip" type="checkbox" />
      </FormRow>
      <SectionLabel>用来查询的关键字:</SectionLabel>
      <GridRow>
        <GridBox $height="169px">
          <GridView>
            <DataTable width={503} columns={KEY_COLUMNS} rows={[['1', 'FID', '=', 'FID']]} count={6} />
          </GridView>
          <ScrollTrack>
            <Svg width="6" height="8" viewBox="0 0 6 8" fill="none" stroke="#444" strokeWidth="2"><path d="M5 .7L1.500 4 5 7.300" /></Svg>
            <ScrollThumb />
            <Svg width="6" height="8" viewBox="0 0 6 8" fill="none" stroke="#444" strokeWidth="2"><path d="M1 .7L4.500 4 1 7.300" /></Svg>
          </ScrollTrack>
        </GridBox>
        <GridButtons>
          <Button type="button" $width={66}>获取字段</Button>
        </GridButtons>
      </GridRow>
      <SectionLabel>更新字段:</SectionLabel>
      <GridRow $fill>
        <GridBox $height="100%" $open>
          <DataTable
            columns={UPDATE_COLUMNS}
            rows={[['1', 'SHARE_FIGURE', 'SHARE_FIGURE', 'N'], ['2']]}
            selected={1}
            count={26}
          />
        </GridBox>
        <GridButtons>
          <Button type="button" $width={102}>获取和更新字段</Button>
          <Button type="button" $width={88}>Edit mapping</Button>
        </GridButtons>
      </GridRow>
    </Form>
  </UpsertWindow>
);

/* ---------- annotations ---------- */

const Arrow = styled.svg`
  position: absolute;
  top: 360px;
  left: 820px;
  pointer-events: none;
`;

const Highlight = styled.div`
  position: absolute;
  top: 466px;
  left: 1567px;
  width: 100px;
  height: 47px;
  border: 2px solid #f00;
  pointer-events: none;
`;

const Watermark = styled.div`
  position: absolute;
  right: 8px;
  bottom: 8px;
  font-family: "Open Sans", sans-serif;
  font-size: 15px;
  line-height: 22px;
  color: #dcdcdc;
`;

const App = () => (
  <Desktop>
    <GlobalStyle />
    <MainWindow />
    <MappingDialog />
    <UpsertDialog />
    <Arrow width="750" height="150" viewBox="0 0 750 150">
      <path d="M10 10.500L744 144.500" stroke="#f00" />
      <path d="M3 9l10-3-1.500 8.500z" fill="#f00" />
    </Arrow>
    <Highlight />
    <Watermark>https://blog.csdn.net/panbinglin</Watermark>
  </Desktop>
);

export default App;
